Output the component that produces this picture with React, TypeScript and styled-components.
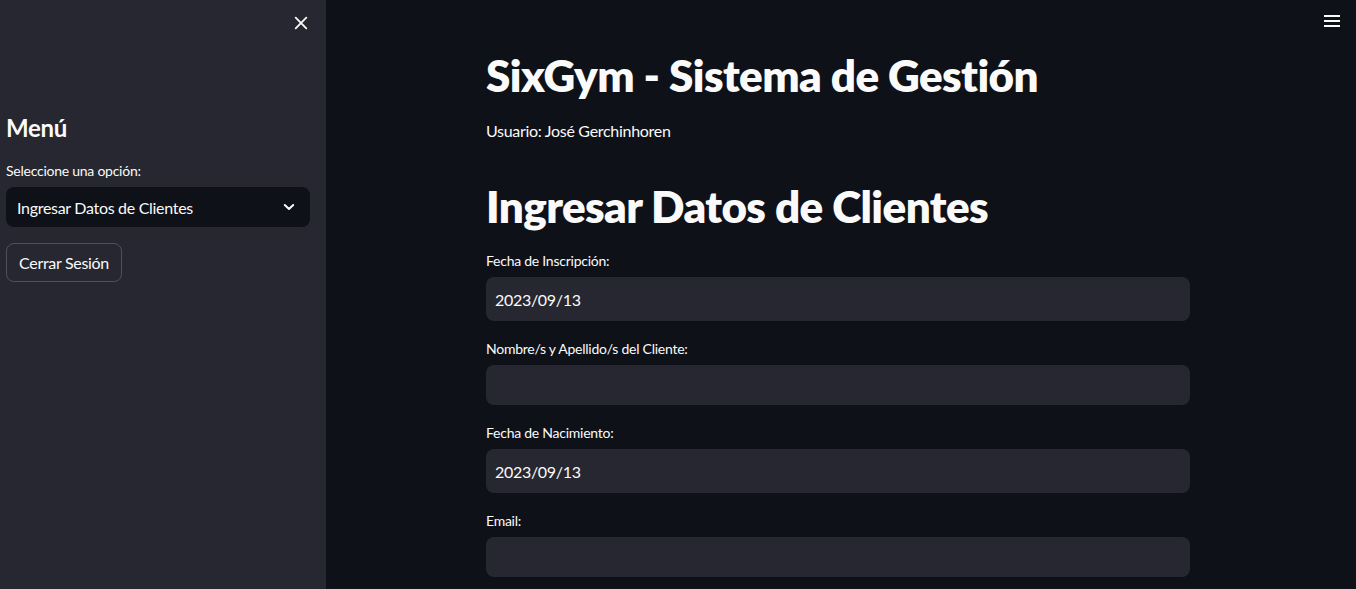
import React from "react";
import styled, { createGlobalStyle } from "styled-components";

const FONT = `Lato, "Noto Sans", sans-serif`;

const GlobalStyle = createGlobalStyle`
  html, body {
    margin: 0;
    padding: 0;
    background: #0e1117;
    height: 100%;
  }
  body {
    font-family: ${FONT};
    color: #fafafa;
    -webkit-font-smoothing: antialiased;
  }
  #root { height: 100%; }
  * { box-sizing: border-box; }
`;

const Shell = styled.div`
  display: flex;
  width: 100%;
  height: 589px;
  overflow: hidden;
  background: #0e1117;
`;

const Sidebar = styled.aside`
  width: 326px;
  flex: 0 0 326px;
  background: #262730;
  display: flex;
  flex-direction: column;
`;

const SidebarTop = styled.div`
  height: 45px;
  display: flex;
  justify-content: flex-end;
  align-items: center;
  padding-right: 13px;
`;

const IconButton = styled.button`
  width: 24px;
  height: 24px;
  padding: 0;
  border: none;
  background: transparent;
  color: #fafafa;
  display: flex;
  align-items: center;
  justify-content: center;
  cursor: pointer;
`;

const SidebarContent = styled.div`
  padding: 65px 16px 0 6px;
  display: flex;
  flex-direction: column;
`;

const SidebarTitle = styled.h2`
  margin: 0;
  font-size: 24px;
  font-weight: 700;
  line-height: 36px;
  letter-spacing: -0.3px;
`;

const Label = styled.label`
  display: block;
  font-size: 14px;
  line-height: 20px;
  margin-bottom: 6px;
  letter-spacing: -0.25px;
`;

const SidebarLabel = styled(Label)`
  margin-top: 15px;
`;

const Select = styled.div`
  height: 40px;
  border-radius: 8px;
  background: #0e1117;
  display: flex;
  align-items: center;
  justify-content: space-between;
  padding: 0 15px 0 11px;
  font-size: 16px;
  letter-spacing: -0.3px;
`;

const OutlineButton = styled.button`
  align-self: flex-start;
  margin-top: 16px;
  height: 39px;
  padding: 0 12px;
  border-radius: 8px;
  border: 1px solid rgba(250, 250, 250, 0.2);
  background: transparent;
  color: #fafafa;
  font-family: ${FONT};
  font-size: 16px;
  letter-spacing: -0.3px;
`;

const Main = styled.main`
  flex: 1;
  display: flex;
  flex-direction: column;
`;

const MainTop = styled.div`
  height: 42px;
  display: flex;
  justify-content: flex-end;
  align-items: center;
  padding-right: 12px;
`;

const Block = styled.div`
  width: 704px;
  margin-left: 160px;
  display: flex;
  flex-direction: column;
`;

const Title = styled.h1`
  margin: 0;
  font-size: 44px;
  font-weight: 800;
  line-height: 66px;
  letter-spacing: -0.6px;
`;

const Para = styled.p`
  margin: 11px 0 0;
  font-size: 16px;
  line-height: 24px;
  letter-spacing: -0.3px;
`;

const Section = styled(Title)`
  margin-top: 30px;
`;

const Field = styled.div<{ $first?: boolean }>`
  margin-top: ${(p) => (p.$first ? "12px" : "18px")};
  display: flex;
  flex-direction: column;
`;

const Input = styled.div<{ $tall?: boolean }>`
  height: ${(p) => (p.$tall ? "44px" : "40px")};
  border-radius: 8px;
  background: #262730;
  display: flex;
  align-items: center;
  padding: 0 9px;
  font-size: 16px;
  letter-spacing: -0.3px;
`;

const XIcon = () => (
  <svg width="14" height="14" viewBox="0 0 14 14">
    <path d="M1.7 1.7 L12.3 12.3 M12.3 1.7 L1.7 12.3" stroke="#fafafa" strokeWidth="1.8" strokeLinecap="round" />
  </svg>
);

const Chevron = () => (
  <svg width="12" height="8" viewBox="0 0 12 8">
    <path d="M1.8 2 L6 6 L10.2 2" stroke="#fafafa" strokeWidth="2" fill="none" strokeLinecap="round" strokeLinejoin="round" />
  </svg>
);

const Burger = () => (
  <svg width="16" height="12" viewBox="0 0 16 12">
    <rect x="0" y="0" width="16" height="2" fill="#fafafa" />
    <rect x="0" y="5" width="16" height="2" fill="#fafafa" />
    <rect x="0" y="10" width="16" height="2" fill="#fafafa" />
  </svg>
);

export default function App() {
  const fields = [
    { label: "Fecha de Inscripción:", value: "2023/09/13", tall: true },
    { label: "Nombre/s y Apellido/s del Cliente:", value: "", tall: false },
    { label: "Fecha de Nacimiento:", value: "2023/09/13", tall: true },
    { label: "Email:", value: "", tall: false },
  ];
  return (
    <>
      <GlobalStyle />
      <Shell>
        <Sidebar>
          <SidebarTop>
            <IconButton aria-label="close">
              <XIcon />
            </IconButton>
          </SidebarTop>
          <SidebarContent>
            <SidebarTitle>Menú</SidebarTitle>
            <SidebarLabel>Seleccione una opción:</SidebarLabel>
            <Select>
              <span>Ingresar Datos de Clientes</span>
              <Chevron />
            </Select>
            <OutlineButton>Cerrar Sesión</OutlineButton>
          </SidebarContent>
        </Sidebar>
        <Main>
          <MainTop>
            <IconButton aria-label="menu">
              <Burger />
            </IconButton>
          </MainTop>
          <Block>
            <Title>SixGym - Sistema de Gestión</Title>
            <Para>Usuario: José Gerchinhoren</Para>
            <Section>Ingresar Datos de Clientes</Section>
            {fields.map((f, i) => (
              <Field key={f.label} $first={i === 0}>
                <Label>{f.label}</Label>
                <Input $tall={f.tall}>{f.value}</Input>
              </Field>
            ))}
          </Block>
        </Main>
      </Shell>
    </>
  );
}
